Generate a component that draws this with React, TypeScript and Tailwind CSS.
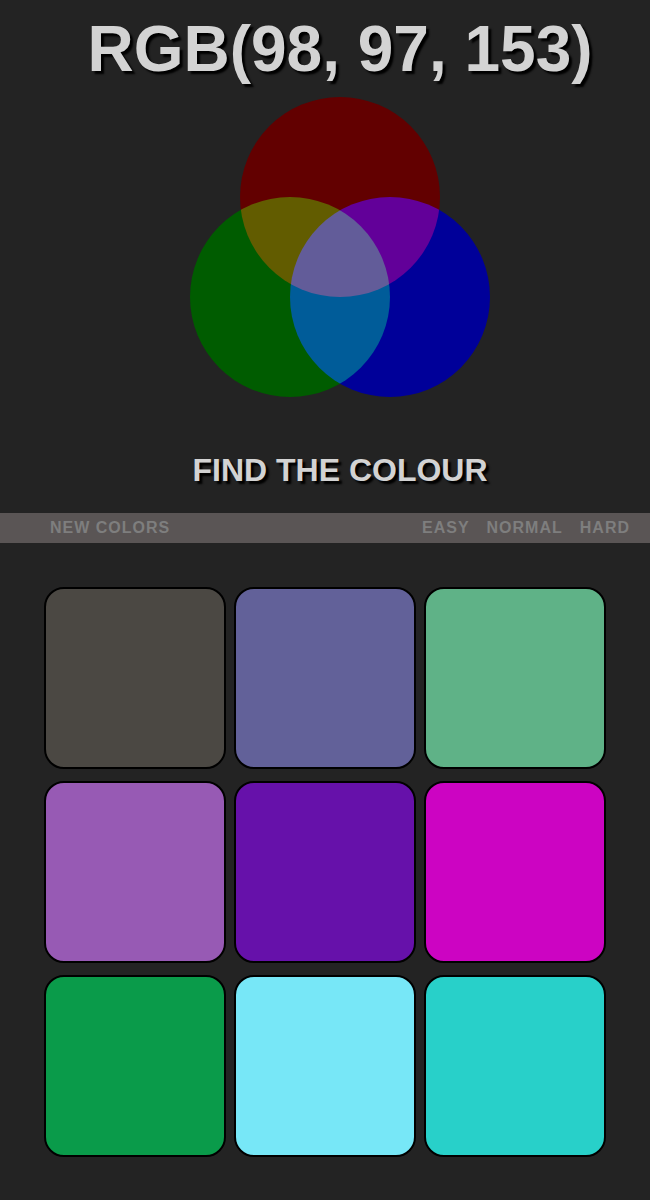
import React from "react";

const cards = [
  "bg-[#4b4843]",
  "bg-[#626199]",
  "bg-[#5fb287]",
  "bg-[#975ab4]",
  "bg-[#6611aa]",
  "bg-[#cc04c2]",
  "bg-[#0a9b4a]",
  "bg-[#77e7f7]",
  "bg-[#28d0c9]",
];

export default function App() {
  return (
    <div className="min-h-[1200px] bg-[#232323] font-['Liberation_Sans',Arial,sans-serif]">
      <div className="flex flex-col items-center pl-[30px] pt-[17px]">
        <h1 className="text-[64px] leading-none font-bold text-[#d3d3d3] [text-shadow:3px_3px_2px_#000] whitespace-nowrap">
          RGB(98, 97, 153)
        </h1>
        <svg width="300" height="300" viewBox="0 0 300 300" className="mt-[16px] isolate">
          <circle cx="150" cy="100" r="100" fill="rgb(98,0,0)" style={{ mixBlendMode: "lighten" }} />
          <circle cx="100" cy="200" r="100" fill="rgb(0,92,0)" style={{ mixBlendMode: "lighten" }} />
          <circle cx="200" cy="200" r="100" fill="rgb(0,0,153)" style={{ mixBlendMode: "lighten" }} />
        </svg>
        <p className="mt-[57px] text-[32px] leading-none font-bold text-[#d3d3d3] [text-shadow:3px_3px_2px_#000] whitespace-nowrap">
          FIND THE COLOUR
        </p>
      </div>
      <div className="mt-[27px] h-[30px] bg-[#5a5555] flex items-center justify-between text-[16px] font-bold tracking-[1px] text-[#7e7e7e]">
        <span className="pl-[50px]">NEW COLORS</span>
        <div className="flex gap-[17px] pr-[20px]">
          <span>EASY</span>
          <span>NORMAL</span>
          <span>HARD</span>
        </div>
      </div>
      <div className="mt-[44px] px-[44px] grid grid-cols-3 gap-x-[8px] gap-y-[12px]">
        {cards.map((c, i) => (
          <div key={i} className={`h-[182px] rounded-[20px] border-2 border-black ${c}`} />
        ))}
      </div>
    </div>
  );
}
